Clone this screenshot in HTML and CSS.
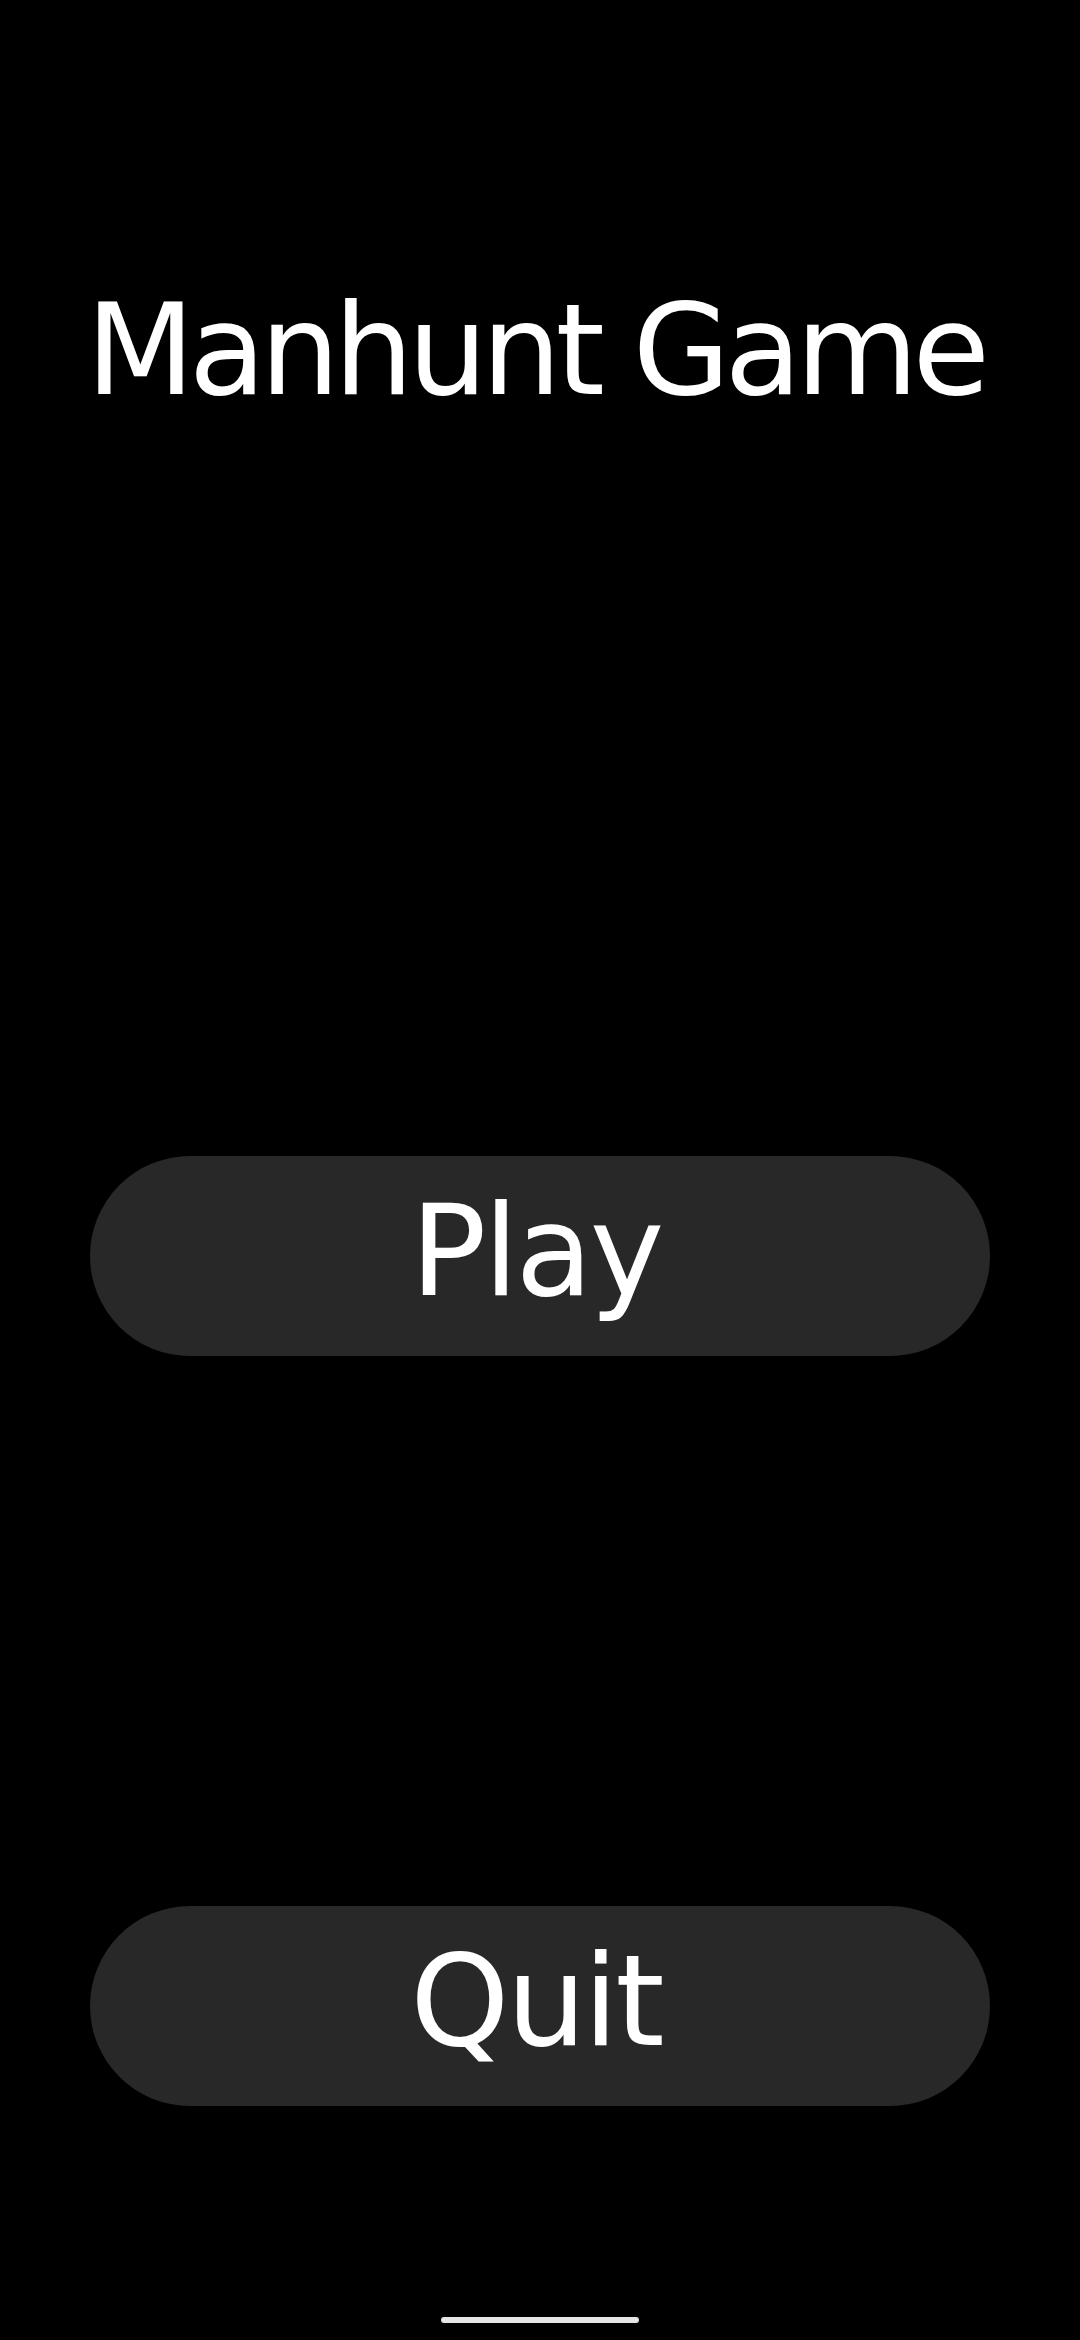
FILE: index.html
```html
<!DOCTYPE html>
<html lang="en">
<head>
<meta charset="utf-8">
<title>Manhunt Game</title>
<link rel="stylesheet" href="styles.css">
</head>
<body>
<main class="screen">
  <h1 class="title">Manhunt Game</h1>
  <button class="btn btn-play" type="button">Play</button>
  <button class="btn btn-quit" type="button">Quit</button>
  <div class="home-indicator"></div>
</main>
</body>
</html>
```

FILE: styles.css
```css
html, body {
  margin: 0;
  padding: 0;
  background: #000;
}

.screen {
  width: 1080px;
  height: 2340px;
  display: flex;
  flex-direction: column;
  align-items: center;
  box-sizing: border-box;
  padding-top: 288px;
  font-family: "DejaVu Sans", "Liberation Sans", sans-serif;
  color: #fff;
}

.title {
  margin: 0;
  font-size: 126px;
  font-weight: 400;
  line-height: 126px;
  letter-spacing: -6px;
  text-align: center;
  padding-right: 10px;
}

.btn {
  width: 900px;
  height: 200px;
  border: none;
  border-radius: 100px;
  background: #282828;
  color: #fff;
  font-family: inherit;
  font-size: 126px;
  font-weight: 400;
  line-height: 126px;
  letter-spacing: -3px;
  display: flex;
  align-items: center;
  justify-content: center;
  padding: 0 8px 9px 0;
  box-sizing: border-box;
}

.btn-play {
  margin-top: 742px;
}

.btn-quit {
  margin-top: 550px;
}

.home-indicator {
  margin-top: 211px;
  width: 198px;
  height: 6px;
  border-radius: 3px;
  background: #e6e6e6;
}
```
